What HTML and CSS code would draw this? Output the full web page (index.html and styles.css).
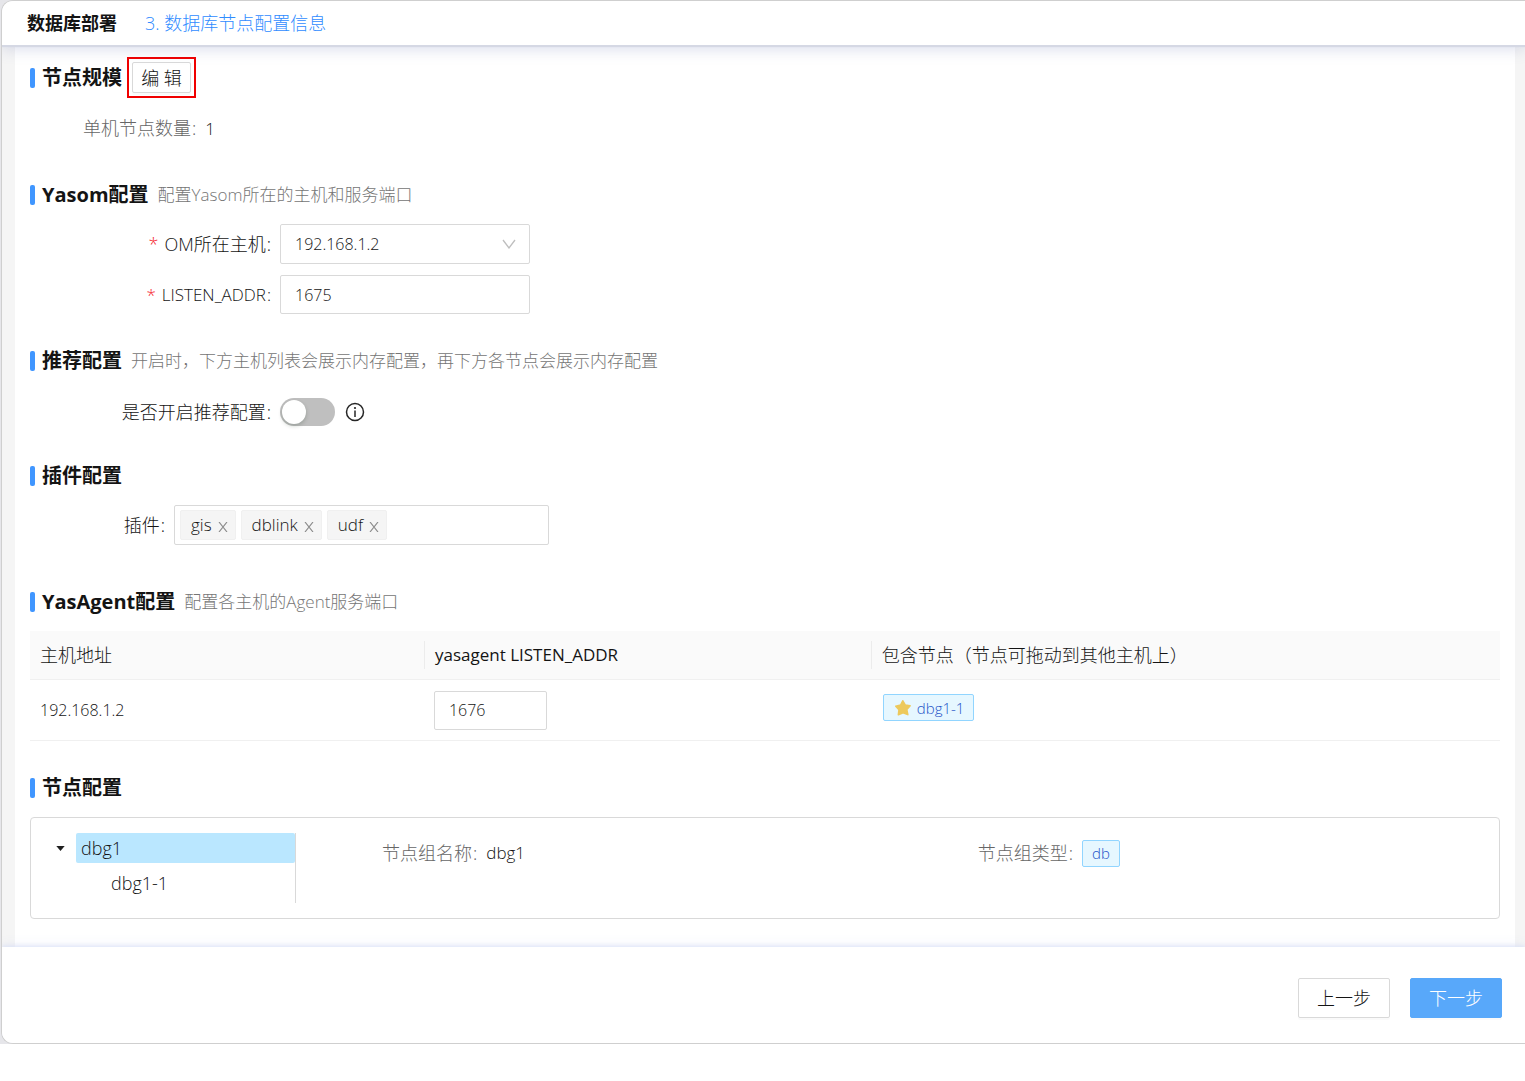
FILE: index.html
```html
<!DOCTYPE html>
<html lang="zh-CN">
<head>
<meta charset="utf-8">
<meta name="viewport" content="width=device-width, initial-scale=1">
<title>数据库部署</title>
<link rel="stylesheet" href="styles.css">
</head>
<body>
<div class="backdrop">
  <div class="window">
    <header class="topbar">
      <h1 class="topbar-title">数据库部署</h1>
      <span class="topbar-step">3. 数据库节点配置信息</span>
    </header>

    <main class="panel">
      <section class="section">
        <div class="heading heading-tall">
          <h2 class="heading-title">节点规模</h2>
          <span class="highlight"><button type="button" class="btn btn-small">编 辑</button></span>
        </div>
        <p class="summary"><span class="muted colon">单机节点数量</span><span class="value">1</span></p>
      </section>

      <section class="section section-form">
        <div class="heading">
          <h2 class="heading-title">Yasom配置</h2>
          <span class="hint">配置Yasom所在的主机和服务端口</span>
        </div>
        <div class="form">
          <label class="label required colon" for="om-host">OM所在主机</label>
          <div class="select-box">
            <select id="om-host" class="control"><option>192.168.1.2</option></select>
            <svg class="chevron" viewBox="0 0 14 10" aria-hidden="true"><path d="M1 1l6 8 6-8" fill="none" stroke="#bfbfbf" stroke-width="1.3"/></svg>
          </div>
          <label class="label label-latin required colon" for="listen-addr">LISTEN_ADDR</label>
          <input id="listen-addr" class="control" type="text" value="1675">
        </div>
      </section>

      <section class="section section-switch">
        <div class="heading">
          <h2 class="heading-title">推荐配置</h2>
          <span class="hint">开启时，下方主机列表会展示内存配置，再下方各节点会展示内存配置</span>
        </div>
        <div class="form">
          <label class="label colon" for="recommend">是否开启推荐配置</label>
          <div class="switch-row">
            <input id="recommend" class="switch" type="checkbox" role="switch">
            <svg class="info" viewBox="0 0 20 20" aria-hidden="true"><circle cx="10" cy="10" r="8.5" fill="none" stroke="#262626" stroke-width="1.5"/><circle cx="10" cy="6" r="1.1" fill="#262626"/><path d="M10 8.5v6.5" stroke="#262626" stroke-width="1.5"/></svg>
          </div>
        </div>
      </section>

      <section class="section section-plugin">
        <div class="heading">
          <h2 class="heading-title">插件配置</h2>
        </div>
        <div class="form form-plugin">
          <label class="label colon" for="plugins">插件</label>
          <div class="chips">
            <span class="chip">gis<button type="button" class="chip-close" aria-label="gis"><svg viewBox="0 0 10 10"><path d="M1 0l8 10M9 0l-8 10"/></svg></button></span>
            <span class="chip">dblink<button type="button" class="chip-close" aria-label="dblink"><svg viewBox="0 0 10 10"><path d="M1 0l8 10M9 0l-8 10"/></svg></button></span>
            <span class="chip">udf<button type="button" class="chip-close" aria-label="udf"><svg viewBox="0 0 10 10"><path d="M1 0l8 10M9 0l-8 10"/></svg></button></span>
            <input id="plugins" class="chips-input" type="text">
          </div>
        </div>
      </section>

      <section class="section section-agent">
        <div class="heading">
          <h2 class="heading-title">YasAgent配置</h2>
          <span class="hint">配置各主机的Agent服务端口</span>
        </div>
        <table class="hosts">
          <colgroup><col class="col-host"><col class="col-addr"><col></colgroup>
          <thead>
            <tr>
              <th scope="col"><span>主机地址</span></th>
              <th scope="col" class="latin"><span>yasagent LISTEN_ADDR</span></th>
              <th scope="col"><span>包含节点（节点可拖动到其他主机上）</span></th>
            </tr>
          </thead>
          <tbody>
            <tr>
              <td>192.168.1.2</td>
              <td><input class="control control-short" type="text" value="1676" aria-label="yasagent LISTEN_ADDR"></td>
              <td class="nodes-cell"><span class="tag"><svg class="star" viewBox="0 0 18 18" aria-hidden="true"><path d="M8.800 1.800l2.400 4.200 4.900.8-3.300 3.800 1 5L9 13.800l-4.600 1.900.6-5L1.800 7.200l4.800-1.200z" fill="#edc95c" stroke="#edc95c" stroke-width="1.600" stroke-linejoin="round"/></svg>dbg1-1</span></td>
            </tr>
          </tbody>
        </table>
      </section>

      <section class="section section-nodes">
        <div class="heading">
          <h2 class="heading-title">节点配置</h2>
        </div>
        <div class="card">
          <ul class="tree">
            <li class="tree-row"><svg class="caret" viewBox="0 0 10 6" aria-hidden="true"><path d="M0 0h10L5 6z" fill="#1f1f1f"/></svg><span class="tree-node tree-selected">dbg1</span></li>
            <li class="tree-row tree-child"><span class="tree-node">dbg1-1</span></li>
          </ul>
          <div class="details">
            <p class="detail"><span class="muted colon">节点组名称</span><span class="value">dbg1</span></p>
            <p class="detail"><span class="muted colon">节点组类型</span><span class="tag">db</span></p>
          </div>
        </div>
      </section>
    </main>

    <footer class="actions">
      <button type="button" class="btn">上一步</button>
      <button type="button" class="btn btn-primary">下一步</button>
    </footer>
  </div>
</div>
</body>
</html>
```
FILE: styles.css
```css
* { box-sizing: border-box; }

body {
  margin: 0;
  background: #fff;
  color: #141414;
  font: 300 18px/28px "Open Sans", "Noto Sans CJK SC", sans-serif;
}

h1, h2, p, ul { margin: 0; padding: 0; }
ul { list-style: none; }
button, input, select { font: inherit; color: inherit; }

.backdrop { padding-left: 1px; background: #e6e6ea; }

.window {
  border: 1px solid #cfcfcf;
  border-right: 0;
  border-radius: 12px 0 0 12px;
  background: #f5f5f5;
  overflow: hidden;
}

.topbar {
  position: relative;
  display: flex;
  align-items: center;
  gap: 28px;
  height: 44px;
  padding: 0 25px;
  background: #fff;
  box-shadow: 0 2px 1px #d5d8e4, 0 3px 16px rgba(90, 105, 170, 0.25);
}
.topbar-title { font-size: 18px; font-weight: 700; }
.topbar-step { color: #2f8cff; }

.panel {
  margin: 0 10px 0 13px;
  padding: 12px 15px 28px;
  background: #fff;
}

.section-form { padding-top: 41px; }
.section-switch { padding-top: 32px; }
.section-plugin { padding-top: 35px; }
.section-agent { padding-top: 42px; }
.section-nodes { padding-top: 32px; }

.heading {
  display: flex;
  align-items: center;
  height: 30px;
  margin-bottom: 14px;
}
.heading::before {
  content: "";
  width: 5px;
  height: 20px;
  margin-right: 7px;
  border-radius: 2px;
  background: #4096ff;
}
.heading-tall { height: 41px; margin-bottom: 16px; }
.section-switch .heading { margin-bottom: 22px; }
.heading-title { font-size: 20px; font-weight: 700; }
.hint { margin-left: 9px; color: #757575; font-size: 17px; }
.highlight {
  display: flex;
  margin-left: 5px;
  padding: 3px;
  border: 2px solid #f00000;
}

.muted { color: #666; }
.value { font-size: 17px; }
.colon::after { content: ":"; margin: 0 9px 0 1px; }
.summary { padding-left: 53px; height: 25px; }

.form {
  display: grid;
  grid-template-columns: 250px 250px;
  gap: 11px 0;
  align-items: center;
}
.form-plugin { grid-template-columns: 144px 375px; }
.label { text-align: right; white-space: nowrap; }
.label-latin { font-size: 17px; }
.required::before { content: "*"; margin-right: 6px; color: #f5222d; }

.control {
  display: block;
  width: 100%;
  height: 39px;
  padding: 0 14px;
  border: 1px solid #d9d9d9;
  border-radius: 2px;
  background: #fff;
  font-size: 16px;
}
select.control { height: 40px; appearance: none; }
.control-short { width: 113px; }
.select-box { position: relative; }
.chevron {
  position: absolute;
  top: 15px;
  right: 14px;
  width: 14px;
  height: 10px;
  pointer-events: none;
}

.switch-row { display: flex; align-items: center; gap: 10px; height: 28px; }
.switch {
  appearance: none;
  width: 55px;
  height: 28px;
  margin: 0;
  padding: 2px;
  border-radius: 14px;
  background: #bfbfbf;
}
.switch::before {
  content: "";
  display: block;
  width: 24px;
  height: 24px;
  border-radius: 50%;
  background: #fff;
  box-shadow: 0 2px 4px rgba(0, 35, 11, 0.2);
}
.info { width: 20px; height: 20px; }

.chips {
  display: flex;
  gap: 5px;
  height: 40px;
  padding: 4px 5px;
  border: 1px solid #d9d9d9;
  border-radius: 2px;
}
.chip {
  display: flex;
  align-items: center;
  gap: 6px;
  padding: 0 7px 0 10px;
  border: 1px solid #f0f0f0;
  border-radius: 2px;
  background: #f5f5f5;
  font-size: 17px;
}
.chip-close { display: flex; padding: 4px 0 0; border: 0; background: none; }
.chip-close svg { width: 10px; height: 10px; fill: none; stroke: #8c8c8c; stroke-width: 1.2; }
.chips-input { flex: 1; min-width: 0; border: 0; outline: 0; background: none; }

.hosts { width: 100%; table-layout: fixed; border-collapse: separate; border-spacing: 0; }
.col-host { width: 26.8%; }
.col-addr { width: 30.4%; }
.hosts th {
  height: 49px;
  padding: 0;
  border-bottom: 1px solid #f0f0f0;
  background: #fafafa;
  font-weight: 300;
  text-align: left;
}
.hosts th span { display: block; padding-left: 10px; }
.hosts th + th span { border-left: 1px solid #ececec; }
.hosts .latin { font-size: 17px; font-weight: 500; }
.hosts td {
  height: 61px;
  padding: 0 10px;
  border-bottom: 1px solid #f0f0f0;
  font-size: 16px;
}
.hosts .nodes-cell { padding: 14px 12px; vertical-align: top; }

.tag {
  display: inline-flex;
  align-items: center;
  gap: 5px;
  height: 27px;
  padding: 0 9px;
  border: 1px solid #91d5ff;
  border-radius: 2px;
  background: #e6f7ff;
  color: #1f55c8;
  font-size: 15px;
}
.nodes-cell .tag { display: flex; width: max-content; padding-left: 10px; }
.star { width: 18px; height: 18px; }

.card {
  display: flex;
  padding: 15px 0;
  border: 1px solid #d9d9d9;
  border-radius: 4px;
}
.tree {
  display: grid;
  gap: 5px;
  width: 265px;
  padding-bottom: 5px;
  border-right: 1px solid #d9d9d9;
}
.tree-row { display: flex; align-items: center; padding-left: 25px; line-height: 30px; }
.tree-child { padding-left: 75px; }
.caret { width: 9px; height: 5px; margin-right: 11px; }
.tree-node { flex: 1; padding-left: 5px; border-radius: 2px; }
.tree-selected { background: #bae7ff; }
.details {
  flex: 1;
  display: grid;
  grid-template-columns: 8fr 7fr;
  align-items: start;
  padding: 6px 0 0 86px;
}
.detail { display: flex; align-items: center; }

.btn {
  width: 92px;
  height: 40px;
  padding: 0;
  border: 1px solid #d9d9d9;
  border-radius: 2px;
  background: #fff;
  box-shadow: 0 2px 0 rgba(0, 0, 0, 0.02);
}
.btn-small { width: 59px; height: 31px; }
.btn-primary { border-color: #58a8fa; background: #58a8fa; color: #fff; }

.actions {
  position: relative;
  display: flex;
  justify-content: flex-end;
  gap: 20px;
  padding: 31px 23px 25px;
  background: #fff;
  box-shadow: 0 -1px 4px #dce2f6, 0 -2px 12px rgba(90, 120, 220, 0.08);
}
```
